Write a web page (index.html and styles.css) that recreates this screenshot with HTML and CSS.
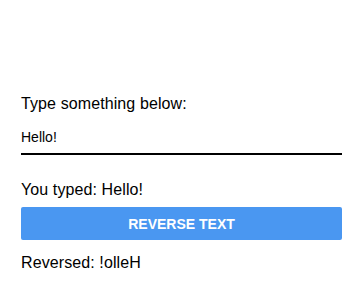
FILE: index.html
```html
<!DOCTYPE html>
<html>
<head>
<meta charset="utf-8">
<link rel="stylesheet" href="styles.css">
</head>
<body>
<div class="screen">
  <div class="label">Type something below:</div>
  <div class="field">Hello!</div>
  <div class="echo">You typed: Hello!</div>
  <div class="button">REVERSE TEXT</div>
  <div class="result">Reversed: !olleH</div>
</div>
</body>
</html>
```

FILE: styles.css
```css
html, body {
  margin: 0;
  padding: 0;
  background: #ffffff;
}
body {
  font-family: "Liberation Sans", Arial, sans-serif;
  color: #000000;
}
.screen {
  width: 321px;
  padding: 95px 0 0 21px;
  display: flex;
  flex-direction: column;
}
.label {
  font-size: 16px;
  line-height: 18px;
  letter-spacing: 0.1px;
}
.field {
  margin-top: 16px;
  font-size: 14px;
  line-height: 16px;
  padding-bottom: 8px;
  border-bottom: 2px solid #000000;
}
.echo {
  margin-top: 26px;
  font-size: 16px;
  line-height: 18px;
  letter-spacing: 0.1px;
}
.button {
  margin-top: 8px;
  height: 33px;
  background: #4a97f1;
  border-radius: 2px;
  color: #ffffff;
  font-weight: bold;
  font-size: 14px;
  display: flex;
  align-items: center;
  justify-content: center;
}
.result {
  margin-top: 14px;
  font-size: 16px;
  line-height: 18px;
  letter-spacing: 0.1px;
}
```
